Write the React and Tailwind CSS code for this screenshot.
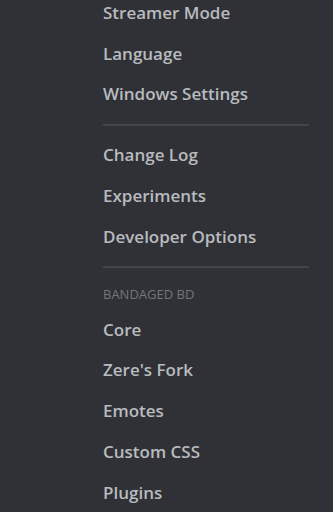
export default function App() {
  const Item = ({ children }) => (
    <div className="h-[40.8px] flex items-center text-[17px] font-semibold text-[#b9bbbe] leading-none">{children}</div>
  );
  const Sep = () => <div className="h-[2px] bg-[#42454a] w-[206px]" />;
  return (
    <div className="w-[333px] h-[512px] overflow-hidden bg-[#2f3136]" style={{ fontFamily: '"Open Sans", "Noto Sans", sans-serif' }}>
      <div className="pl-[103px] -mt-[8px] flex flex-col">
        <Item>Streamer Mode</Item>
        <Item>Language</Item>
        <Item>Windows Settings</Item>
        <div className="pt-[10px] pb-[8px]"><Sep /></div>
        <Item>Change Log</Item>
        <Item>Experiments</Item>
        <Item>Developer Options</Item>
        <div className="pt-[9px]"><Sep /></div>
        <div className="pt-[20px] pb-[8px] text-[13px] leading-[13px] uppercase text-[#72767d] font-medium">Bandaged BD</div>
        <Item>Core</Item>
        <Item>Zere's Fork</Item>
        <Item>Emotes</Item>
        <Item>Custom CSS</Item>
        <Item>Plugins</Item>
      </div>
    </div>
  );
}
